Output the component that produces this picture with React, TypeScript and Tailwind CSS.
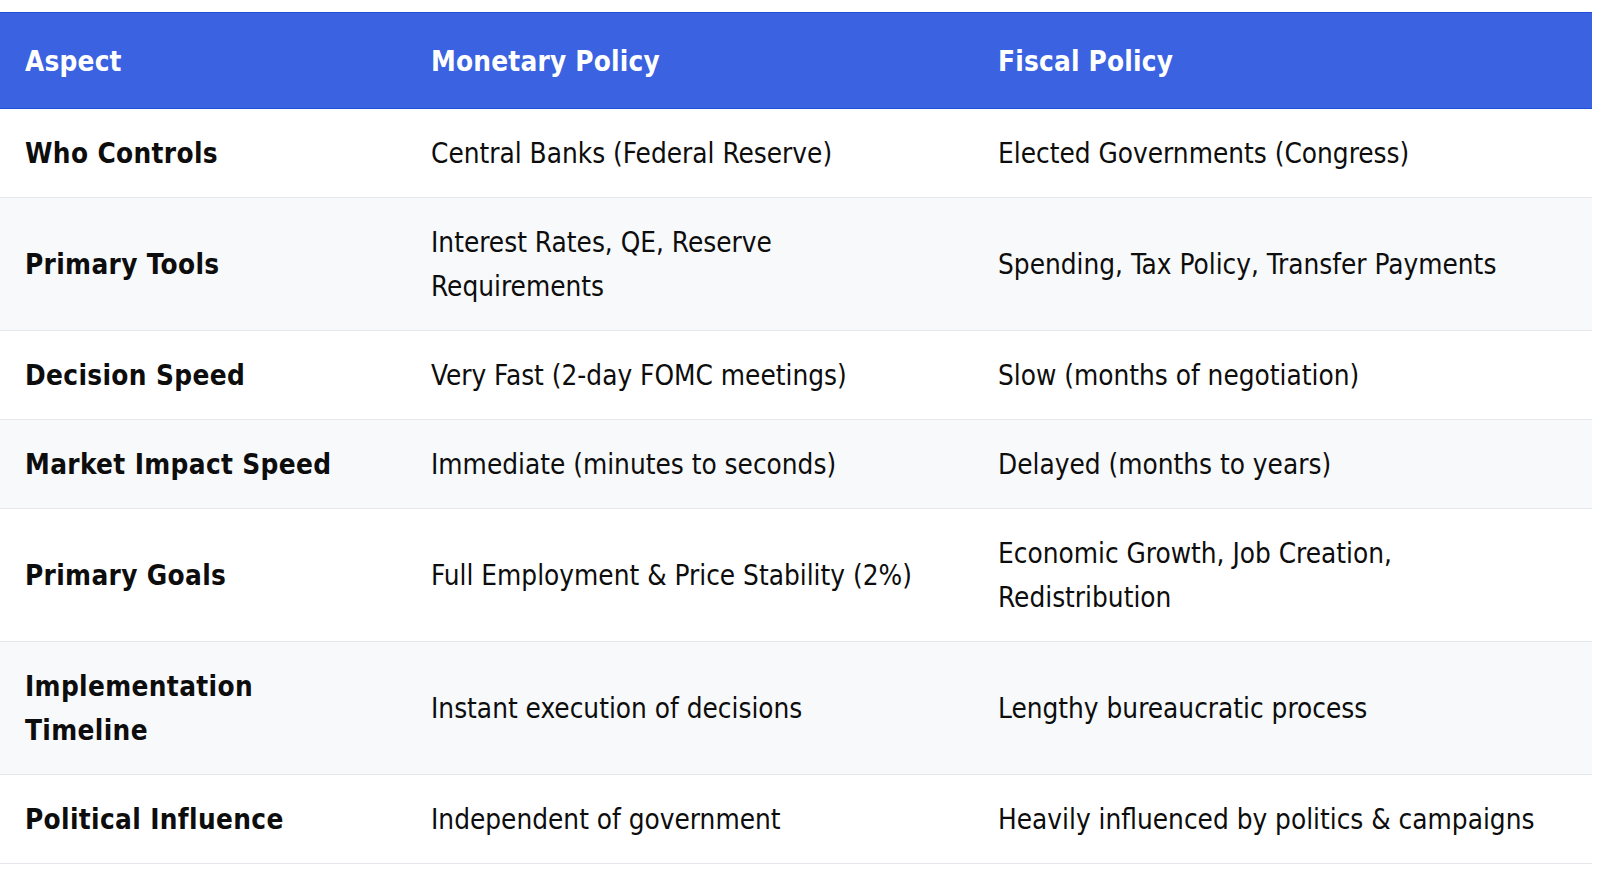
const rows: [string, string, string][] = [
  ["Who Controls", "Central Banks (Federal Reserve)", "Elected Governments (Congress)"],
  ["Primary Tools", "Interest Rates, QE, Reserve Requirements", "Spending, Tax Policy, Transfer Payments"],
  ["Decision Speed", "Very Fast (2-day FOMC meetings)", "Slow (months of negotiation)"],
  ["Market Impact Speed", "Immediate (minutes to seconds)", "Delayed (months to years)"],
  ["Primary Goals", "Full Employment & Price Stability (2%)", "Economic Growth, Job Creation, Redistribution"],
  ["Implementation Timeline", "Instant execution of decisions", "Lengthy bureaucratic process"],
  ["Political Influence", "Independent of government", "Heavily influenced by politics & campaigns"],
]

export default function App() {
  return (
    <div
      className="min-h-screen bg-white pt-[12px] text-[27.7px] leading-[44px] text-[#0d0d0d]"
      style={{ fontFamily: '"DejaVu Sans Condensed", "DejaVu Sans", Verdana, sans-serif', fontStretch: "condensed" }}
    >
      <table className="w-[1592px] table-fixed border-collapse">
        <colgroup>
          <col className="w-[406px]" />
          <col className="w-[567px]" />
          <col className="w-[619px]" />
        </colgroup>
        <thead>
          <tr className="border-y border-[#1f4fd9] bg-[#3a62e1] text-left text-white">
            <th className="px-[25px] pt-[27px] pb-[24px] font-bold tracking-[0.2px]">Aspect</th>
            <th className="px-[25px] pt-[27px] pb-[24px] font-bold tracking-[0.2px]">Monetary Policy</th>
            <th className="px-[25px] pt-[27px] pb-[24px] font-bold tracking-[0.2px]">Fiscal Policy</th>
          </tr>
        </thead>
        <tbody>
          {rows.map(([aspect, monetary, fiscal], i) => (
            <tr key={aspect} className={`border-b border-[#e6e7ec] ${i % 2 === 1 ? "bg-[#f8f9fb]" : "bg-white"}`}>
              <td className="pt-[23px] pb-[21px] pl-[25px] pr-[30px] align-middle font-bold tracking-[0.35px]">{aspect}</td>
              <td className="px-[25px] pt-[23px] pb-[21px] align-middle">{monetary}</td>
              <td className="px-[25px] pt-[23px] pb-[21px] align-middle">{fiscal}</td>
            </tr>
          ))}
        </tbody>
      </table>
    </div>
  )
}
